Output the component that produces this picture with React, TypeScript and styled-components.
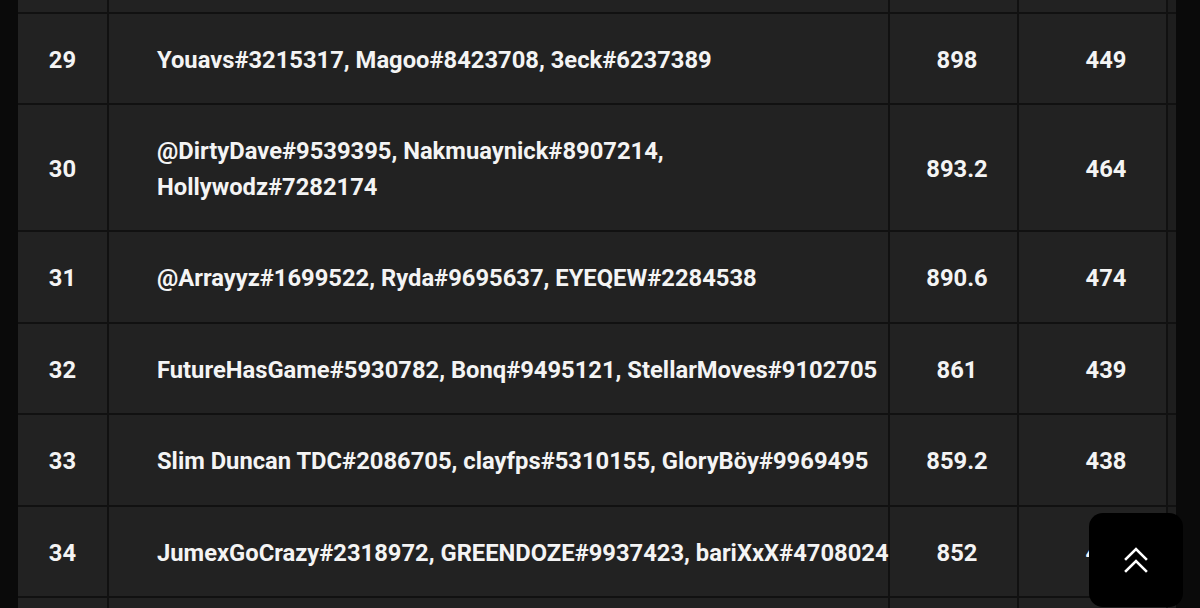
import styled, { createGlobalStyle } from 'styled-components';

const GlobalStyle = createGlobalStyle`
  html,
  body {
    margin: 0;
    padding: 0;
    background: #0b0b0b;
    overflow: hidden;
  }
  * {
    box-sizing: border-box;
  }
`;

const Page = styled.div`
  height: 608px;
  overflow: hidden;
  display: flex;
  align-items: flex-start;
  padding-left: 18px;
  background: #0a0a0a;
  font-family: Roboto, 'Noto Sans', 'Liberation Sans', sans-serif;
`;

// 표 전체 (테두리는 gap 사이로 보이는 배경색)
const Board = styled.div`
  width: 1158px;
  margin-top: -78px;
  display: flex;
  flex-direction: column;
  gap: 2px;
  background: #111111;
`;

const Row = styled.div`
  display: grid;
  grid-template-columns: 89px 779px 127px 147px 8px;
  column-gap: 2px;
`;

interface ICell {
  $align?: 'left' | 'center';
  $padLeft?: number;
}

const Cell = styled.div<ICell>`
  background: #222222;
  color: #f4f4f4;
  font-size: 23.75px;
  font-weight: 700;
  line-height: 35.5px;
  min-height: 89.5px;
  padding: 29px 0 25px ${(props) => props.$padLeft ?? 0}px;
  text-align: ${(props) => props.$align ?? 'center'};
  white-space: pre;
  display: flex;
  align-items: center;
  justify-content: ${(props) => (props.$align === 'left' ? 'flex-start' : 'center')};
`;

const Edge = styled.div`
  background: #1e1e1e;
`;

const TopButton = styled.button`
  position: fixed;
  right: 17px;
  bottom: 1px;
  width: 94px;
  height: 94px;
  border: none;
  border-radius: 14px;
  background: #000;
  display: flex;
  align-items: center;
  justify-content: center;
  padding: 0;
  cursor: pointer;
`;

const rows = [
  { rank: 28, names: '', score: '', pts: '' },
  { rank: 29, names: 'Youavs#3215317, Magoo#8423708, 3eck#6237389', score: '898', pts: '449' },
  {
    rank: 30,
    names: '@DirtyDave#9539395, Nakmuaynick#8907214,\nHollywodz#7282174',
    score: '893.2',
    pts: '464',
  },
  { rank: 31, names: '@Arrayyz#1699522, Ryda#9695637, EYEQEW#2284538', score: '890.6', pts: '474' },
  {
    rank: 32,
    names: 'FutureHasGame#5930782, Bonq#9495121, StellarMoves#9102705',
    score: '861',
    pts: '439',
  },
  {
    rank: 33,
    names: 'Slim Duncan TDC#2086705, clayfps#5310155, GloryBöy#9969495',
    score: '859.2',
    pts: '438',
  },
  {
    rank: 34,
    names: 'JumexGoCrazy#2318972, GREENDOZE#9937423, bariXxX#4708024',
    score: '852',
    pts: '431',
  },
  { rank: 35, names: '', score: '', pts: '' },
];

export default function App() {
  return (
    <>
      <GlobalStyle />
      <Page>
        <Board>
          {rows.map((row) => (
            <Row key={row.rank}>
              <Cell>{row.names ? row.rank : ''}</Cell>
              <Cell $align="left" $padLeft={48}>
                {row.names}
              </Cell>
              <Cell $padLeft={7}>{row.score}</Cell>
              <Cell $padLeft={27}>{row.pts}</Cell>
              <Edge />
            </Row>
          ))}
        </Board>
      </Page>
      <TopButton aria-label="맨 위로">
        <svg width="24" height="28" viewBox="0 0 24 28" fill="none">
          <polyline
            points="2,13 12,3 22,13"
            stroke="#fff"
            strokeWidth="2.6"
            strokeLinecap="square"
          />
          <polyline
            points="2,25 12,15 22,25"
            stroke="#fff"
            strokeWidth="2.6"
            strokeLinecap="square"
          />
        </svg>
      </TopButton>
    </>
  );
}
